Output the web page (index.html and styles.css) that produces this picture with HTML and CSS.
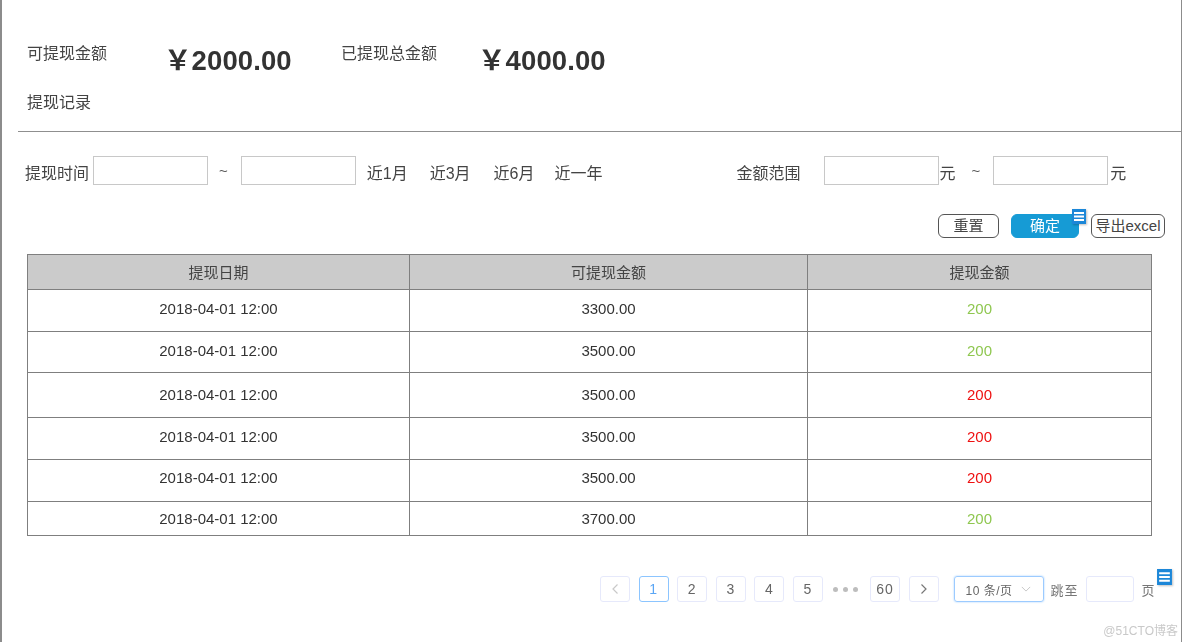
FILE: index.html
```html
<!DOCTYPE html>
<html lang="zh-CN">
<head>
    <meta charset="UTF-8">
    <meta name="viewport" content="width=device-width, initial-scale=1.0">
    <title>提现记录</title>
    <link rel="stylesheet" href="styles.css">
</head>
<body>
    <div class="page">
        <div class="summary">
            <span class="label label-one">可提现金额</span>
            <span class="amount amount-one">￥2000.00</span>
            <span class="label label-two">已提现总金额</span>
            <span class="amount">￥4000.00</span>
        </div>
        <div class="title">提现记录</div>
        <div class="rule"></div>

        <div class="filters">
            <span class="filter-label">提现时间</span>
            <div class="box date-one"></div>
            <span class="tilde tilde-date">~</span>
            <div class="box date-two"></div>
            <span class="quick q1">近1月</span>
            <span class="quick q2">近3月</span>
            <span class="quick q3">近6月</span>
            <span class="quick q4">近一年</span>
            <span class="range-label">金额范围</span>
            <div class="box money-one"></div>
            <span class="unit">元</span>
            <span class="tilde tilde-money">~</span>
            <div class="box money-two"></div>
            <span class="unit unit-end">元</span>
        </div>

        <div class="actions">
            <button class="btn btn-reset">重置</button>
            <button class="btn btn-ok">确定
                <svg class="note note-ok" viewBox="0 0 14 15"><rect width="14" height="15" fill="#1c87d8"/><path d="M2 4h10M2 7.5h10M2 11h10" stroke="#fff" stroke-width="2"/></svg>
            </button>
            <button class="btn btn-export">导出excel</button>
        </div>

        <table class="records">
            <colgroup>
                <col class="col-date">
                <col class="col-balance">
                <col class="col-money">
            </colgroup>
            <thead>
                <tr class="row-head"><th>提现日期</th><th>可提现金额</th><th>提现金额</th></tr>
            </thead>
            <tbody>
                <tr class="row-1"><td>2018-04-01 12:00</td><td>3300.00</td><td class="green">200</td></tr>
                <tr class="row-2"><td>2018-04-01 12:00</td><td>3500.00</td><td class="green">200</td></tr>
                <tr class="row-3"><td>2018-04-01 12:00</td><td>3500.00</td><td class="red">200</td></tr>
                <tr class="row-4"><td>2018-04-01 12:00</td><td>3500.00</td><td class="red">200</td></tr>
                <tr class="row-5"><td>2018-04-01 12:00</td><td>3500.00</td><td class="red">200</td></tr>
                <tr class="row-6"><td>2018-04-01 12:00</td><td>3700.00</td><td class="green">200</td></tr>
            </tbody>
        </table>

        <div class="pager">
            <span class="pg pg-off"><svg class="chev" viewBox="0 0 8 12"><path d="M6.5 1.5 2 6l4.5 4.5" fill="none" stroke="#c9c9c9" stroke-width="1.2"/></svg></span>
            <span class="pg pg-on">1</span>
            <span class="pg">2</span>
            <span class="pg">3</span>
            <span class="pg">4</span>
            <span class="pg">5</span>
            <span class="dots"><i></i><i></i><i></i></span>
            <span class="pg">60</span>
            <span class="pg"><svg class="chev" viewBox="0 0 8 12"><path d="M1.5 1.5 6 6l-4.5 4.5" fill="none" stroke="#777" stroke-width="1.2"/></svg></span>
            <span class="size">10 条/页<svg class="caret" viewBox="0 0 12 7"><path d="M1 1l5 5 5-5" fill="none" stroke="#c4c4c4" stroke-width="1.1"/></svg></span>
            <span class="jump">跳至</span>
            <span class="pg pg-input"></span>
            <span class="jump jump-end">页</span>
            <svg class="note note-page" viewBox="0 0 14 15"><rect width="14" height="15" fill="#1c87d8"/><path d="M2 4h10M2 7.5h10M2 11h10" stroke="#fff" stroke-width="2"/></svg>
        </div>

        <div class="mark">@51CTO博客</div>
    </div>
</body>
</html>
```

FILE: styles.css
```css
* {
    margin: 0;
    padding: 0;
    box-sizing: border-box;
}
html, body {
    height: 100%;
}
body {
    background: #fff;
    color: #444;
    font-family: "Liberation Sans", "Noto Sans CJK SC", sans-serif;
    font-size: 16px;
    overflow: hidden;
}
.page {
    position: relative;
    width: 1182px;
    height: 642px;
    border-left: 2px solid #8c8c8c;
    border-right: 1px solid #8c8c8c;
    padding-top: 38px;
    filter: blur(0.3px);
}

/* top figures */
.summary {
    display: flex;
    align-items: flex-start;
    height: 44px;
    padding-left: 25px;
}
.label {
    line-height: 32px;
}
.label-one {
    width: 137px;
}
.label-two {
    width: 137px;
}
.amount {
    font-size: 27.5px;
    font-weight: 700;
    color: #333;
    line-height: 46px;
    letter-spacing: 0.1px;
}
.amount-one {
    width: 177px;
}
.title {
    padding-left: 25px;
    margin-top: 9px;
    line-height: 24px;
}
.rule {
    height: 1px;
    margin: 16px 0 0 16px;
    background: #8f8f8f;
}

/* filter row */
.filters {
    display: flex;
    align-items: center;
    height: 30px;
    margin-top: 23px;
    padding-left: 23px;
}
.filters span {
    padding-top: 4px;
}
.box {
    width: 115px;
    height: 29px;
    border: 1px solid #c8c8c8;
    background: #fff;
}
.date-one {
    margin-left: 4px;
}
.tilde {
    color: #555;
    font-size: 15px;
    position: relative;
    top: -2px;
}
.tilde-date {
    margin: 0 13px 0 11px;
}
.date-two {
    margin-right: 11px;
}
.q2 {
    margin-left: 22px;
}
.q3 {
    margin-left: 23px;
}
.q4 {
    margin-left: 20px;
}
.range-label {
    margin-left: 134px;
}
.money-one {
    margin-left: 23px;
}
.unit {
    margin-left: 1px;
}
.unit-end {
    margin-left: 2px;
}
.tilde-money {
    margin: 0 13px 0 16px;
}

/* buttons */
.actions {
    display: flex;
    justify-content: flex-end;
    gap: 12px;
    height: 24px;
    margin-top: 29px;
    padding-right: 16px;
}
.btn {
    position: relative;
    height: 24px;
    border: 1px solid #555;
    border-radius: 6px;
    background: #fff;
    color: #444;
    font-family: inherit;
    font-size: 15px;
    line-height: 22px;
}
.btn-reset {
    width: 61px;
}
.btn-ok {
    width: 68px;
    border-color: #169bd5;
    background: #169bd5;
    color: #fff;
}
.btn-export {
    width: 74px;
    white-space: nowrap;
}
.note {
    position: absolute;
    display: block;
    width: 14px;
    height: 15px;
    box-shadow: 1px 1px 2px rgba(0, 0, 0, 0.25);
}
.note-ok {
    top: -6px;
    right: -8px;
}
.note-page {
    top: -7px;
    left: 557px;
    width: 15px;
    height: 16px;
}

/* table */
.records {
    width: 1125px;
    margin: 16px 0 0 25px;
    border-collapse: collapse;
    table-layout: fixed;
    border: 1px solid #7f7f7f;
    font-size: 15px;
}
.col-date {
    width: 382px;
}
.col-balance {
    width: 398px;
}
.records th, .records td {
    border: 1px solid #7f7f7f;
    text-align: center;
}
.records th {
    background: #cbcbcb;
    color: #444;
    font-size: 15px;
    font-weight: 400;
    padding-bottom: 2px;
}
.records td {
    color: #333;
}
.row-head {
    height: 35px;
}
.row-1 {
    height: 42px;
}
.row-1 td {
    padding-bottom: 4px;
}
.row-2 {
    height: 41px;
}
.row-2 td {
    padding-bottom: 3px;
}
.row-3 {
    height: 45px;
}
.row-3 td {
    padding-bottom: 1px;
}
.row-4 {
    height: 42px;
}
.row-4 td {
    padding-bottom: 4px;
}
.row-5 {
    height: 42px;
}
.row-5 td {
    padding-bottom: 6px;
}
.row-6 {
    height: 34px;
}
.row-6 td {
    padding-bottom: 1px;
}
.records .green {
    color: #8fc750;
}
.records .red {
    color: #ee1111;
}

/* pagination, a little softer than the rest as in the picture */
.pager {
    position: absolute;
    top: 576px;
    left: 598px;
    display: flex;
    align-items: center;
    height: 26px;
    font-size: 14px;
    letter-spacing: 1px;
    color: #666;
    filter: blur(0.3px);
}
.pg {
    display: flex;
    align-items: center;
    justify-content: center;
    width: 30px;
    height: 26px;
    margin-right: 8.6px;
    border: 1px solid #e6e9fb;
    border-radius: 3px;
    background: #fff;
}
.pg-on {
    border-color: #8cc5ff;
    color: #5aa6f5;
}
.chev {
    width: 8px;
    height: 12px;
}
.dots {
    display: flex;
    gap: 5px;
    width: 29.8px;
    margin-right: 8.6px;
    padding-left: 1px;
}
.dots i {
    width: 5px;
    height: 5px;
    border-radius: 50%;
    background: #bdbdbd;
}
.size {
    display: flex;
    align-items: center;
    width: 90px;
    height: 26px;
    margin-left: 6.4px;
    padding-left: 11px;
    border: 1px solid #9ccbff;
    border-radius: 3px;
    box-shadow: 0 0 2px #9ccbff;
    font-size: 12px;
    letter-spacing: 0.5px;
    white-space: nowrap;
}
.caret {
    width: 10px;
    height: 6px;
    margin-left: 8px;
}
.jump {
    margin-left: 7px;
    font-size: 13px;
    color: #777;
}
.pg-input {
    width: 48px;
    margin: 0 0 0 7px;
}
.jump-end {
    margin-left: 8px;
}
.mark {
    position: absolute;
    top: 621px;
    right: 3px;
    font-size: 12px;
    color: #c9c9c9;
}
```
